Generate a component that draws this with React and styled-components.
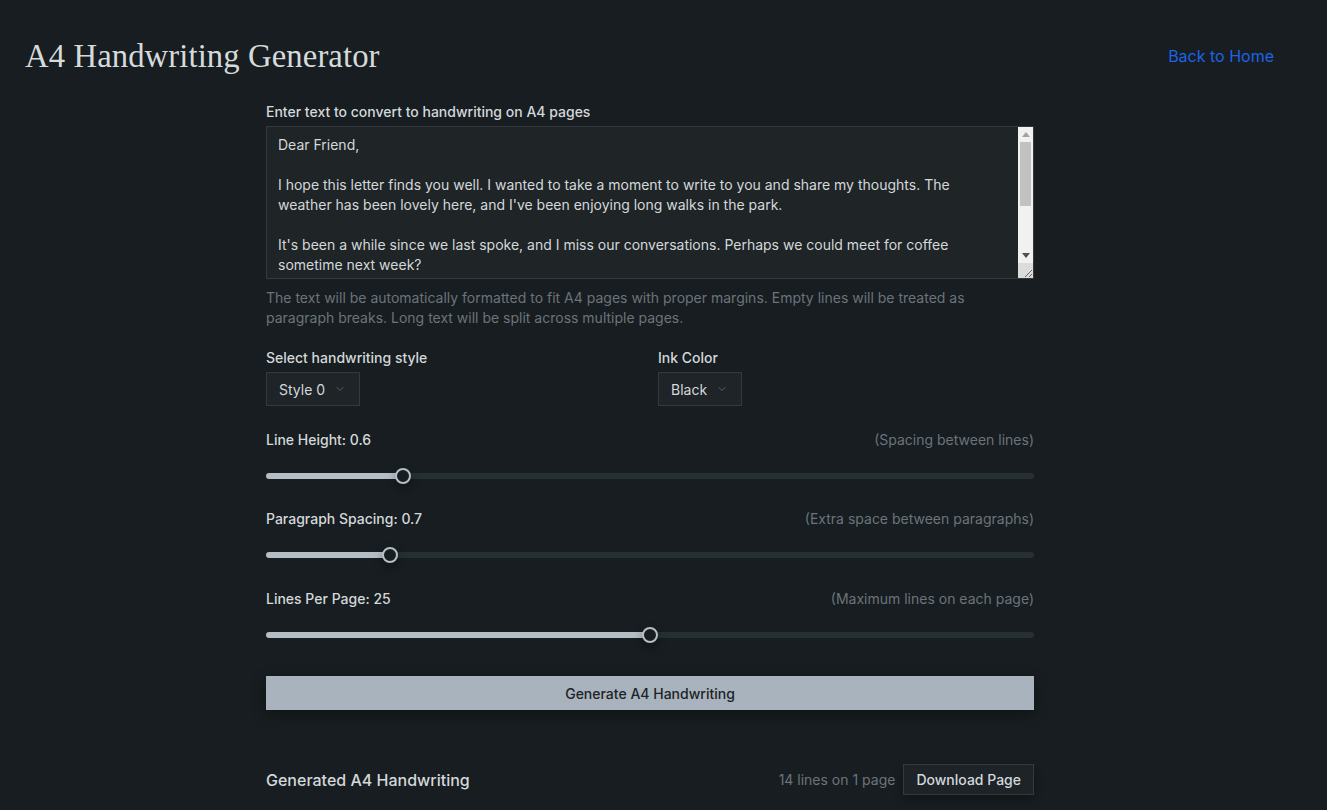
import React, { useState } from "react";
import styled, { createGlobalStyle } from "styled-components";
import { ChevronDown } from "lucide-react";

const GlobalStyle = createGlobalStyle`
  html, body {
    margin: 0;
    padding: 0;
    background: #171d20;
    overflow: hidden;
  }
  body {
    font-family: Inter, "Noto Sans", sans-serif;
    color: #d3d8da;
  }
  * { box-sizing: border-box; }
`;

const Page = styled.div`
  min-height: 810px;
  background: #171d20;
`;

const Header = styled.header`
  display: flex;
  align-items: center;
  justify-content: space-between;
  height: 88px;
  padding: 24px 53px 0 25px;
`;

const Title = styled.h1`
  margin: 0;
  font-family: "Liberation Serif", "DejaVu Serif", serif;
  font-weight: 400;
  font-size: 32.7px;
  letter-spacing: 0.1px;
  color: #d5dadb;
`;

const HomeLink = styled.a`
  font-size: 16px;
  color: #1d64e6;
  text-decoration: none;
`;

const Main = styled.main`
  width: 768px;
  margin: 14px 0 0 266px;
`;

const Label = styled.label`
  display: block;
  font-size: 14px;
  line-height: 20px;
  font-weight: 500;
  color: #d3d8da;
  margin-bottom: 4px;
`;

const TextWrap = styled.div`
  position: relative;
  width: 768px;
  height: 153px;
`;

const TextArea = styled.textarea`
  display: block;
  width: 100%;
  height: 100%;
  padding: 8px 27px 8px 11px;
  background: #1f2427;
  border: 1px solid #33393c;
  color: #d3d8da;
  font-family: Inter, "Noto Sans", sans-serif;
  font-size: 14px;
  line-height: 20px;
  resize: none;
  overflow: hidden;
  outline: none;
`;

/* native-looking scrollbar drawn over the textarea's right edge */
const ScrollRail = styled.div`
  position: absolute;
  top: 1px;
  right: 1px;
  bottom: 1px;
  width: 15px;
  display: flex;
  flex-direction: column;
  background: #f1f1f1;
`;

const ArrowBtn = styled.div`
  height: 15px;
  display: flex;
  align-items: center;
  justify-content: center;
  flex-shrink: 0;
`;

const ScrollThumb = styled.div`
  height: 64px;
  margin: 0 2px;
  background: #c1c1c1;
`;

const Spacer = styled.div`
  flex: 1;
`;

const Resizer = styled.div`
  height: 15px;
  flex-shrink: 0;
  background: #dcdcdc;
  display: flex;
  align-items: flex-end;
  justify-content: flex-end;
`;

const Help = styled.p`
  margin: 9px 0 0;
  font-size: 14px;
  line-height: 20px;
  color: #6b747c;
`;

const TwoCols = styled.div`
  display: grid;
  grid-template-columns: 1fr 1fr;
  gap: 16px;
  margin-top: 20px;
`;

const Field = styled.div`
  display: flex;
  flex-direction: column;
  align-items: flex-start;
`;

const SelectBox = styled.div`
  display: inline-flex;
  align-items: center;
  gap: 9px;
  height: 34px;
  padding: 0 13px 0 12px;
  background: #1e2427;
  border: 1px solid #33393c;
  font-size: 14px;
  color: #d3d8da;
  svg { color: #6b747c; }
`;

const SliderBlock = styled.div`
  margin-top: 23.5px;
`;

const SliderHead = styled.div`
  display: flex;
  justify-content: space-between;
  font-size: 14px;
  line-height: 20px;
  margin-bottom: 16px;
`;

const SliderLabel = styled.span`
  font-weight: 500;
  color: #d3d8da;
`;

const Hint = styled.span`
  color: #6b747c;
`;

const Range = styled.input`
  -webkit-appearance: none;
  appearance: none;
  display: block;
  width: 768px;
  height: 20px;
  margin: 0;
  background: transparent;
  outline: none;

  &::-webkit-slider-runnable-track {
    height: 6px;
    border-radius: 3px;
    background: linear-gradient(
      to right,
      #b5bdc5 0%,
      #b5bdc5 var(--fill),
      #263030 var(--fill),
      #263030 100%
    );
  }
  &::-webkit-slider-thumb {
    -webkit-appearance: none;
    width: 16px;
    height: 16px;
    margin-top: -5px;
    border-radius: 50%;
    background: #171d20;
    border: 2px solid #b5bdc5;
    box-shadow: 0 4px 10px rgba(0, 0, 0, 0.35);
  }
`;

const GenerateButton = styled.button`
  display: block;
  width: 768px;
  height: 34px;
  margin-top: 31.5px;
  border: none;
  background: #a9b3bd;
  color: #1d2326;
  font-family: Inter, "Noto Sans", sans-serif;
  font-size: 14px;
  font-weight: 500;
  box-shadow: 0 4px 14px rgba(0, 0, 0, 0.35);
  cursor: pointer;
`;

const ResultRow = styled.div`
  display: flex;
  align-items: center;
  justify-content: space-between;
  margin-top: 54px;
`;

const ResultTitle = styled.h2`
  margin: 0;
  font-size: 16px;
  font-weight: 500;
  color: #d3d8da;
`;

const ResultMeta = styled.div`
  display: flex;
  align-items: center;
  gap: 8px;
  font-size: 14px;
  color: #6b747c;
`;

const SmallButton = styled.button`
  height: 31px;
  padding: 0 12px;
  background: #1d2326;
  border: 1px solid #33393c;
  color: #d3d8da;
  font-family: Inter, "Noto Sans", sans-serif;
  font-size: 14px;
  font-weight: 500;
  box-shadow: 0 4px 10px rgba(0, 0, 0, 0.3);
`;

const letter = `Dear Friend,

I hope this letter finds you well. I wanted to take a moment to write to you and share my thoughts. The weather has been lovely here, and I've been enjoying long walks in the park.

It's been a while since we last spoke, and I miss our conversations. Perhaps we could meet for coffee sometime next week?

I've been reading some interesting books lately and would love to share them with you. There's so much to talk about, and I'm sure you have stories to tell as well.

Please give my regards to your family. I hope everyone is doing well.

With warm regards,
Your friend`;

const sliders = [
  { label: "Line Height", value: 0.6, hint: "(Spacing between lines)", min: 0.3, max: 2.05, step: 0.05 },
  { label: "Paragraph Spacing", value: 0.7, hint: "(Extra space between paragraphs)", min: 0.4, max: 2.35, step: 0.05 },
  { label: "Lines Per Page", value: 25, hint: "(Maximum lines on each page)", min: 10, max: 40, step: 1 },
];

function SliderRow({ s }) {
  const [val, setVal] = useState(s.value);
  const pct = ((val - s.min) / (s.max - s.min)) * 100;
  return (
    <SliderBlock>
      <SliderHead>
        <SliderLabel>
          {s.label}: {val}
        </SliderLabel>
        <Hint>{s.hint}</Hint>
      </SliderHead>
      <Range
        type="range"
        min={s.min}
        max={s.max}
        step={s.step}
        value={val}
        onChange={(e) => setVal(Number(e.target.value))}
        style={{ "--fill": `${pct}%` }}
      />
    </SliderBlock>
  );
}

export default function App() {
  const [text, setText] = useState(letter);

  return (
    <Page>
      <GlobalStyle />
      <Header>
        <Title>A4 Handwriting Generator</Title>
        <HomeLink href="#">Back to Home</HomeLink>
      </Header>
      <Main>
        <Label>Enter text to convert to handwriting on A4 pages</Label>
        <TextWrap>
          <TextArea value={text} onChange={(e) => setText(e.target.value)} />
          <ScrollRail>
            <ArrowBtn>
              <svg width="8" height="5" viewBox="0 0 8 5">
                <polygon points="4,0 8,5 0,5" fill="#a3a3a3" />
              </svg>
            </ArrowBtn>
            <ScrollThumb />
            <Spacer />
            <ArrowBtn>
              <svg width="8" height="5" viewBox="0 0 8 5">
                <polygon points="0,0 8,0 4,5" fill="#505050" />
              </svg>
            </ArrowBtn>
            <Resizer>
              <svg width="10" height="10" viewBox="0 0 10 10">
                <path d="M9 2 L2 9 M9 6 L6 9" stroke="#6a6a6a" strokeWidth="1" />
              </svg>
            </Resizer>
          </ScrollRail>
        </TextWrap>
        <Help>
          The text will be automatically formatted to fit A4 pages with proper
          margins. Empty lines will be treated as paragraph breaks. Long text
          will be split across multiple pages.
        </Help>

        <TwoCols>
          <Field>
            <Label>Select handwriting style</Label>
            <SelectBox>
              Style 0 <ChevronDown size={12} strokeWidth={1.5} />
            </SelectBox>
          </Field>
          <Field>
            <Label>Ink Color</Label>
            <SelectBox>
              Black <ChevronDown size={12} strokeWidth={1.5} />
            </SelectBox>
          </Field>
        </TwoCols>

        {sliders.map((s) => (
          <SliderRow key={s.label} s={s} />
        ))}

        <GenerateButton>Generate A4 Handwriting</GenerateButton>

        <ResultRow>
          <ResultTitle>Generated A4 Handwriting</ResultTitle>
          <ResultMeta>
            14 lines on 1 page
            <SmallButton>Download Page</SmallButton>
          </ResultMeta>
        </ResultRow>
      </Main>
    </Page>
  );
}
